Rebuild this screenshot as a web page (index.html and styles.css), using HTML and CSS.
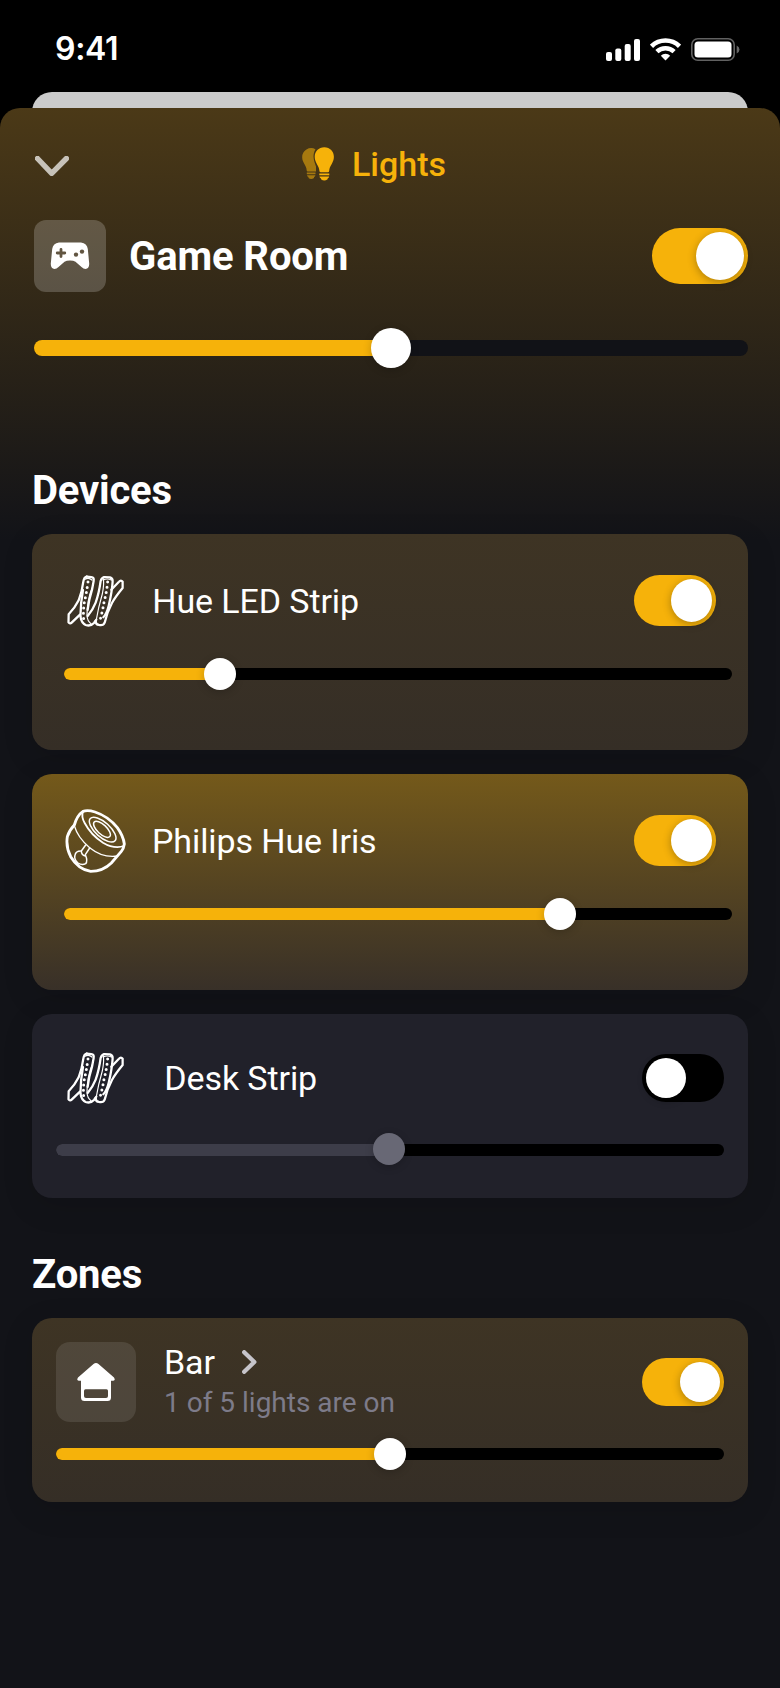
FILE: index.html
```html
<!DOCTYPE html>
<html lang="en">
<head>
<meta charset="utf-8">
<title>Lights</title>
<link rel="stylesheet" href="styles.css">
</head>
<body>
<svg class="defs" width="0" height="0" aria-hidden="true">
  <symbol id="strip" viewBox="142 373 172 156">
    <g fill="none" stroke="#fff" stroke-width="6.800" stroke-linecap="round" stroke-linejoin="round">
      <path d="M201 377.500Q193 379 191 393Q187 425 177 449Q167 470 147 491L146.500 515Q151 521 156 516L181 492"/>
      <path d="M201 377.500L215 379Q224 380 222 391L217 418Q207 450 204 478"/>
      <path d="M190 418Q182 462 182.500 498Q185 517 198 523Q213 528 223 517L230 507"/>
      <path d="M254 379Q246 380 243 391Q238 428 228 456Q220 477 204 496"/>
      <path d="M254 379L271 380Q280 383 279 393Q277 425 267 466Q261 490 251 500"/>
      <path d="M228 511Q228 522 238 523Q251 526 255 516Q263 483 277 457Q286 440 309 412L309 393Q304 386 298 393L275 417"/>
    </g>
    <g fill="none" stroke="#fff" stroke-width="3.500" stroke-linecap="round">
      <path d="M196 386Q207 379 217 388"/>
      <path d="M217 412Q202 450 202 494Q203 512 214 519"/>
      <path d="M251 385Q254 400 248 430Q236 470 229 512"/>
      <path d="M251 388Q263 382 275 388"/>
    </g>
    <g fill="none" stroke="#fff" stroke-width="9" stroke-linecap="round" stroke-dasharray="0 15.800">
      <path d="M205 394Q200 430 194 455Q190 480 192 506"/>
      <path d="M264 394Q261 425 253 455Q249 480 242 505"/>
    </g>
  </symbol>
  <symbol id="chevron-down" viewBox="0 0 34 20">
    <path d="M2.500 2.500L16.700 17.300L31.400 2.500" fill="none" stroke="#fff" stroke-opacity=".7" stroke-width="5.400" stroke-linecap="round" stroke-linejoin="round"/>
  </symbol>
</svg>

<header class="status">
  <span class="time">9:41</span>
  <div class="indicators">
    <svg width="34" height="22" viewBox="0 0 34 22" fill="#fff"><rect x="0" y="13" width="6" height="9" rx="2"/><rect x="9.300" y="9.500" width="6" height="12.500" rx="2"/><rect x="18.700" y="5" width="6" height="17" rx="2"/><rect x="28" y="0" width="6" height="22" rx="2"/></svg>
    <svg class="wifi" width="31" height="23" viewBox="0 0 31 23"><g fill="none" stroke="#fff" stroke-width="4.500"><path d="M1.500 8.300A20 20 0 0 1 29.500 8.300"/><path d="M6.900 13.600A12.500 12.500 0 0 1 24.100 13.600"/></g><path d="M10.800 17.700A6.700 6.700 0 0 1 20.200 17.700L15.500 22.500Z" fill="#fff"/></svg>
    <svg class="battery" width="49" height="23" viewBox="0 0 49 23"><rect x=".8" y=".8" width="42.400" height="21.400" rx="6" fill="none" stroke="#fff" stroke-opacity=".38" stroke-width="1.600"/><rect x="3.500" y="3.500" width="37" height="16" rx="3.500" fill="#fff"/><path d="M45.700 7.500Q48.500 9 48.500 11.500Q48.500 14 45.700 15.500Z" fill="#fff" fill-opacity=".4"/></svg>
  </div>
</header>
<div class="back-sheet"></div>

<main class="sheet">
  <div class="titlebar">
    <svg width="34" height="20"><use href="#chevron-down"/></svg>
    <h1 class="title">
      <svg width="32" height="34" viewBox="0 0 32 34" fill="#f6b20a">
        <g opacity=".55"><path d="M13.500 2.200A9 9 0 0 0 .2 10.500C.3 16 4.500 18 4.700 23.500Q4.800 24.500 5.800 24.500H14V19.500C12.500 15 9.500 9 13.500 2.200Z"/><path d="M4.800 25.500H13.500V27.300H4.800ZM5 28.200H13.400Q13.200 29.700 12 30V31Q9 33 6.500 31V30Q5.300 29.700 5 28.200Z"/></g>
        <path d="M22.300 .3C16.500 .3 12.700 4.600 12.700 9.700C12.700 16 17.200 18.500 17.400 23.800Q17.400 25.300 18.800 25.300H25.800Q27.200 25.300 27.200 23.800C27.400 18.500 31.900 16 31.900 9.700C31.900 4.600 28.100 .3 22.300 .3Z"/>
        <path d="M17.300 26.600H27.300V28.300H17.300ZM17.500 29.500H27.100Q27 31.200 25.600 31.400V32.300Q22.300 34.700 19 32.300V31.400Q17.600 31.200 17.500 29.500Z"/>
      </svg>
      <span>Lights</span>
    </h1>
  </div>

  <section class="room">
    <div class="row">
      <div class="tile tile-room">
        <svg width="40" height="28" viewBox="0 0 40 28"><path d="M9 .4H31Q37 1 37.800 7L39.200 21.500Q39.400 26.500 35.500 27Q33.500 27 31.500 25L25.500 19.800Q23.500 18.500 20 18.500Q16.500 18.500 14.500 19.800L8.500 25Q6.500 27 4.500 27Q.6 26.500 .8 21.500L2.200 7Q3 1 9 .4Z" fill="#fff"/><path d="M11 7.500V14.500M7.200 11H14.800" stroke="#615541" stroke-width="2.800" stroke-linecap="round"/><circle cx="26" cy="12.600" r="2.200" fill="#615541"/><circle cx="32" cy="9.600" r="2.200" fill="#615541"/></svg>
      </div>
      <h2 class="room-name">Game Room</h2>
      <div class="toggle toggle-lg"><i></i></div>
    </div>
    <div class="slider slider-lg"><div class="fill" style="width:357px"></div></div>
  </section>

  <h2 class="heading">Devices</h2>
  <section class="card">
    <div class="row">
      <svg class="icon-strip" width="57.300" height="52"><use href="#strip"/></svg>
      <span class="name">Hue LED Strip</span>
      <div class="toggle toggle-tall"><i></i></div>
    </div>
    <div class="slider"><div class="fill" style="width:155.500px"></div></div>
  </section>
  <section class="card bright">
    <div class="row">
      <svg class="icon-iris" width="62" height="64" viewBox="44 43 186 192" fill="none" stroke="#fff" stroke-linecap="round" stroke-linejoin="round">
        <path stroke-width="8.500" d="M72 91Q80 62 98 50Q112 45 134 52Q174 65 201 99Q219 124 222 148Q220 162 213 170L183 205Q158 230 121 230Q84 224 61 186Q46 156 51 126Q56 108 72 91Z"/>
        <path stroke-width="5.500" d="M98 51Q92 66 103 85Q122 121 158 144Q192 164 221 154"/>
        <path stroke-width="4" d="M72 93Q82 129 118 159Q158 191 202 184"/>
        <ellipse stroke-width="4.500" cx="157" cy="105" rx="50" ry="22" transform="rotate(42 157 105)"/>
        <ellipse stroke-width="4.500" cx="155" cy="104" rx="32" ry="14" transform="rotate(43 155 104)"/>
        <path stroke-width="4.500" d="M106 151L93 169Q77 168 74 181Q70 194 83 205Q95 213 106 207Q113 199 105 180L118 160M93 169Q93 181 105 184"/>
      </svg>
      <span class="name">Philips Hue Iris</span>
      <div class="toggle toggle-tall"><i></i></div>
    </div>
    <div class="slider"><div class="fill" style="width:496px"></div></div>
  </section>
  <section class="card compact off">
    <div class="row">
      <svg class="icon-strip" width="57.300" height="52"><use href="#strip"/></svg>
      <span class="name">Desk Strip</span>
      <div class="toggle toggle-off"><i></i></div>
    </div>
    <div class="slider"><div class="fill" style="width:333px"></div></div>
  </section>

  <h2 class="heading heading-zones">Zones</h2>
  <section class="card compact">
    <div class="row">
      <div class="tile tile-zone">
        <svg width="38" height="38" viewBox="0 0 38 38"><path d="M16.500 1Q19 -.8 21.500 1L37 14.500Q38.800 17.500 36.300 17.800H34V34.500Q34 38 30.500 38H7.500Q4 38 4 34.500V17.800H1.700Q-.8 17.500 1 14.500Z" fill="#fff"/><path d="M8.500 26.300H29.500Q31 26.300 31 27.800V33Q31 35 29 35H9Q7 35 7 33V27.800Q7 26.300 8.500 26.300Z" fill="#4e4538"/></svg>
      </div>
      <div class="zone-text">
        <span class="name zone-name">Bar <svg width="15" height="24" viewBox="0 0 15 24"><path d="M2.200 2.200L12.300 12L2.200 21.800" fill="none" stroke="#c6c4ca" stroke-width="4.300" stroke-linecap="round" stroke-linejoin="round"/></svg></span>
        <span class="sub">1 of 5 lights are on</span>
      </div>
      <div class="toggle"><i></i></div>
    </div>
    <div class="slider"><div class="fill" style="width:334px"></div></div>
  </section>
</main>
</body>
</html>
```
FILE: styles.css
```css
* { box-sizing: border-box; }
body {
  margin: 0;
  width: 780px;
  height: 1688px;
  overflow: hidden;
  background: #000;
  color: #fff;
  font-family: Roboto, "Liberation Sans", sans-serif;
  display: flex;
  flex-direction: column;
}
svg { display: block; flex: none; }
.defs { position: absolute; }
h1, h2 { margin: 0; }

.status {
  height: 92px;
  flex: none;
  padding: 3px 40px 0 55px;
  display: flex;
  justify-content: space-between;
}
.time {
  font: 600 32px/92px Inter, sans-serif;
  letter-spacing: -.3px;
}
.indicators { display: flex; padding-top: 36px; }
.wifi { margin-left: 10px; margin-top: -1px; }
.battery { margin-left: 10px; margin-top: -1px; }

.back-sheet {
  flex: none;
  height: 36px;
  margin: 0 32px -20px;
  border-radius: 20px 20px 0 0;
  background: #cbcbcb;
}
.sheet {
  flex: 1;
  position: relative;
  border-radius: 20px 20px 0 0;
  padding: 0 32px;
  background: linear-gradient(#4b3917, #121318 432px) #121318;
}
.titlebar {
  display: flex;
  padding: 36px 0 0 3px;
  height: 112px;
}
.titlebar > svg { margin-top: 12px; }
.title {
  display: flex;
  gap: 18px;
  margin: 3px 0 0 233px;
  font-size: 34px;
  line-height: 34px;
  font-weight: 500;
  color: #f6b20a;
}

.row { display: flex; align-items: center; }
.row .toggle { margin-left: auto; }
.room { padding: 0 0 0 2px; height: 244px; }
.tile { display: flex; align-items: center; justify-content: center; flex: none; }
.tile-room { width: 72px; height: 72px; border-radius: 12px; background: rgba(255,255,255,.2); }
.room-name { margin: 2px 0 0 23px; font-size: 40px; line-height: 48px; font-weight: 700; letter-spacing: -.1px; }

.toggle {
  width: 82px;
  height: 48px;
  padding: 4px;
  border-radius: 26px;
  background: #f6b20a;
  display: flex;
  justify-content: flex-end;
}
.toggle i {
  width: 40px;
  border-radius: 50%;
  background: #fff;
  box-shadow: 0 2px 8px rgba(0,0,0,.3);
}
.toggle-lg { width: 96px; height: 56px; border-radius: 28px; }
.toggle-lg i { width: 48px; }
.toggle-tall { height: 51px; margin-bottom: 1px; }
.toggle-tall i { width: 41px; }
.toggle-off { background: #000; justify-content: flex-start; }

.slider {
  height: 12px;
  border-radius: 6px;
  background: #000;
}
.slider .fill {
  height: 100%;
  border-radius: 6px 0 0 6px;
  background: #f6b20a;
  display: flex;
  align-items: center;
  justify-content: flex-end;
}
.slider .fill::after {
  content: "";
  flex: none;
  width: 32px;
  height: 32px;
  margin-right: -16px;
  border-radius: 50%;
  background: #fff;
  box-shadow: 0 2px 8px rgba(0,0,0,.2);
}
.slider-lg { height: 16px; border-radius: 8px; margin-top: 48px; background: #111217; }
.slider-lg .fill { border-radius: 8px 0 0 8px; }
.slider-lg .fill::after { width: 40px; height: 40px; margin-right: -20px; }

.heading { font-size: 40px; line-height: 48px; height: 70px; padding-top: 3px; font-weight: 700; letter-spacing: -.2px; }
.heading-zones { height: 96px; margin-top: 24px; padding-top: 29px; }

.card {
  height: 216px;
  margin-bottom: 24px;
  padding: 35px 16px 0 32px;
  border-radius: 20px;
  background: linear-gradient(#3e3424, #352e26);
  box-shadow: 0 8px 32px rgba(0,0,0,.12);
}
.card.bright { background: linear-gradient(#74591a, #383028); }
.card .row { height: 64px; }
.card .toggle-tall { margin-right: 16px; }
.card .slider { margin-top: 35px; }
.name { font-size: 34px; line-height: 40px; letter-spacing: -.1px; }
.icon-strip { margin-left: 3px; }
.icon-strip + .name { margin-left: 28px; }
.icon-iris { margin-left: 1px; }
.icon-iris + .name { margin-left: 25px; }

.card.compact { height: 184px; padding: 24px 24px 0; }
.compact .row { height: 80px; }
.compact .slider { margin-top: 26px; }
.compact .icon-strip { margin-left: 11px; }
.compact .icon-strip + .name { margin-left: 40px; }
.card.off { background: #21212a; }
.off .slider .fill { background: #3d3d49; }
.off .slider .fill::after { background: #686875; position: relative; top: -1px; }

.tile-zone { width: 80px; height: 80px; border-radius: 14px; background: rgba(255,255,255,.1); }
.zone-text { margin-left: 28px; display: flex; flex-direction: column; }
.zone-name { display: flex; align-items: center; gap: 27px; }
.sub { font-size: 28px; line-height: 40px; padding-top: 1px; margin-bottom: -1px; color: #7d7b89; }
```
